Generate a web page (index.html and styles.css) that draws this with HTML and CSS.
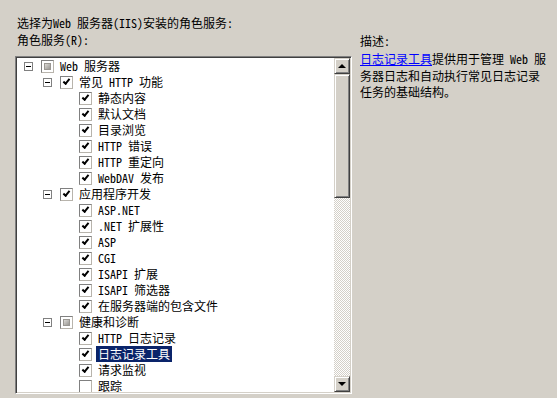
FILE: index.html
```html
<!DOCTYPE html>
<html lang="zh-CN">
<head>
    <meta charset="UTF-8">
    <title>选择角色服务</title>
    <link rel="stylesheet" href="styles.css">
</head>
<body>
<div class="page">
    <div class="intro">选择为Web 服务器(IIS)安装的角色服务:</div>
    <div class="columns">
        <div class="left">
            <div class="label">角色服务(R):</div>
            <div class="listbox">
                <div class="tree">
                    <div class="row l1"><span class="exp"></span><span class="cb mixed"></span><span class="txt">Web 服务器</span></div>
                    <div class="row l2"><span class="exp"></span><span class="cb on"></span><span class="txt">常见 HTTP 功能</span></div>
                    <div class="row l3"><span class="cb on"></span><span class="txt">静态内容</span></div>
                    <div class="row l3"><span class="cb on"></span><span class="txt">默认文档</span></div>
                    <div class="row l3"><span class="cb on"></span><span class="txt">目录浏览</span></div>
                    <div class="row l3"><span class="cb on"></span><span class="txt">HTTP 错误</span></div>
                    <div class="row l3"><span class="cb on"></span><span class="txt">HTTP 重定向</span></div>
                    <div class="row l3"><span class="cb on"></span><span class="txt">WebDAV 发布</span></div>
                    <div class="row l2"><span class="exp"></span><span class="cb on"></span><span class="txt">应用程序开发</span></div>
                    <div class="row l3"><span class="cb on"></span><span class="txt">ASP.NET</span></div>
                    <div class="row l3"><span class="cb on"></span><span class="txt">.NET 扩展性</span></div>
                    <div class="row l3"><span class="cb on"></span><span class="txt">ASP</span></div>
                    <div class="row l3"><span class="cb on"></span><span class="txt">CGI</span></div>
                    <div class="row l3"><span class="cb on"></span><span class="txt">ISAPI 扩展</span></div>
                    <div class="row l3"><span class="cb on"></span><span class="txt">ISAPI 筛选器</span></div>
                    <div class="row l3"><span class="cb on"></span><span class="txt">在服务器端的包含文件</span></div>
                    <div class="row l2"><span class="exp"></span><span class="cb mixed"></span><span class="txt">健康和诊断</span></div>
                    <div class="row l3"><span class="cb on"></span><span class="txt">HTTP 日志记录</span></div>
                    <div class="row l3"><span class="cb on"></span><span class="txt selected">日志记录工具</span></div>
                    <div class="row l3"><span class="cb on"></span><span class="txt">请求监视</span></div>
                    <div class="row l3"><span class="cb"></span><span class="txt">跟踪</span></div>
                </div>
                <div class="scrollbar">
                    <div class="sbtn up"></div>
                    <div class="thumb"></div>
                    <div class="track"></div>
                    <div class="sbtn down"></div>
                </div>
            </div>
        </div>
        <div class="right">
            <div class="label">描述:</div>
            <p class="desc"><a href="#">日志记录工具</a>提供用于管理 Web 服务器日志和自动执行常见日志记录任务的基础结构。</p>
        </div>
    </div>
</div>
</body>
</html>
```

FILE: styles.css
```css
body {
    margin: 0;
    background-color: #d4d0c8;
    color: #000;
    font-family: "Noto Sans Mono CJK SC", "Noto Sans CJK SC", "Liberation Mono", monospace;
    font-size: 12px;
    line-height: 16px;
}
.page {
    padding: 15px 0 0 15px;
}
.intro {
    padding-left: 2px;
}
.columns {
    display: flex;
    gap: 8px;
}
.label {
    padding: 1px 0 0 2px;
    height: 16px;
}

/* list box:  */
.listbox {
    margin-top: 8px;
    width: 337px;
    height: 338px;
    box-sizing: border-box;
    display: flex;
    background: #fff;
    border: 1px solid;
    border-color: #808080 #fff #fff #808080;
    box-shadow: inset 1px 1px #404040, inset -1px -1px #d4d0c8;
    padding: 1px;
}
.tree {
    flex: 1;
    overflow: hidden;
}
.row {
    display: flex;
    align-items: center;
    height: 16px;
    white-space: nowrap;
}
.l1 { padding-left: 7px; }
.l2 { padding-left: 26px; }
.l3 { padding-left: 45px; }
.l3 .cb { margin-left: 17px; }

.exp {
    position: relative;
    width: 9px;
    height: 9px;
    box-sizing: border-box;
    border: 1px solid #808080;
    background: #fff;
    margin-right: 8px;
    flex: none;
}
.exp::after {
    content: "";
    position: absolute;
    left: 1px;
    top: 3px;
    width: 5px;
    height: 1px;
    background: #000;
}

/* check boxes:  */
.cb {
    position: relative;
    width: 13px;
    height: 13px;
    box-sizing: border-box;
    border: 1px solid #808080;
    border-right-color: #b8b4ac;
    border-bottom-color: #b8b4ac;
    background: #fff;
    margin-right: 4px;
    flex: none;
}
.cb.on::after {
    content: "";
    position: absolute;
    left: 2px;
    top: 2px;
    width: 5px;
    height: 2px;
    border-left: 2px solid #000;
    border-bottom: 2px solid #000;
    transform: rotate(-50deg);
}
.cb.mixed::after {
    content: "";
    position: absolute;
    left: 2px;
    top: 2px;
    width: 7px;
    height: 7px;
    background: linear-gradient(135deg, #e8e6e2, #8c8a86);
    box-shadow: inset 0 0 0 1px #9a9792;
}
.txt {
    padding: 0 2px;
    line-height: 16px;
}
.selected {
    background: #0a246a;
    color: #fff;
}

/* scroll bar:  */
.scrollbar {
    width: 16px;
    display: flex;
    flex-direction: column;
}
.sbtn, .thumb {
    box-sizing: border-box;
    background: #d4d0c8;
    border: 1px solid;
    border-color: #d4d0c8 #404040 #404040 #d4d0c8;
    box-shadow: inset 1px 1px #fff, inset -1px -1px #808080;
}
.sbtn {
    height: 16px;
    position: relative;
}
.sbtn::after {
    content: "";
    position: absolute;
    left: 3px;
    width: 0;
    height: 0;
    border-left: 4px solid transparent;
    border-right: 4px solid transparent;
}
.up::after {
    top: 5px;
    border-bottom: 4px solid #000;
}
.down::after {
    top: 5px;
    border-top: 4px solid #000;
}
.thumb {
    height: 124px;
}
.track {
    flex: 1;
    background-image: conic-gradient(#fff 25%, #d4d0c8 0 50%, #fff 0 75%, #d4d0c8 0);
    background-size: 2px 2px;
}

/* description:  */
.right {
    width: 188px;
}
.right .label {
    padding: 2px 0 0;
}
.desc {
    margin: 2px 0 0;
    line-height: 16.5px;
}
.desc a {
    color: #0000ff;
}
```
